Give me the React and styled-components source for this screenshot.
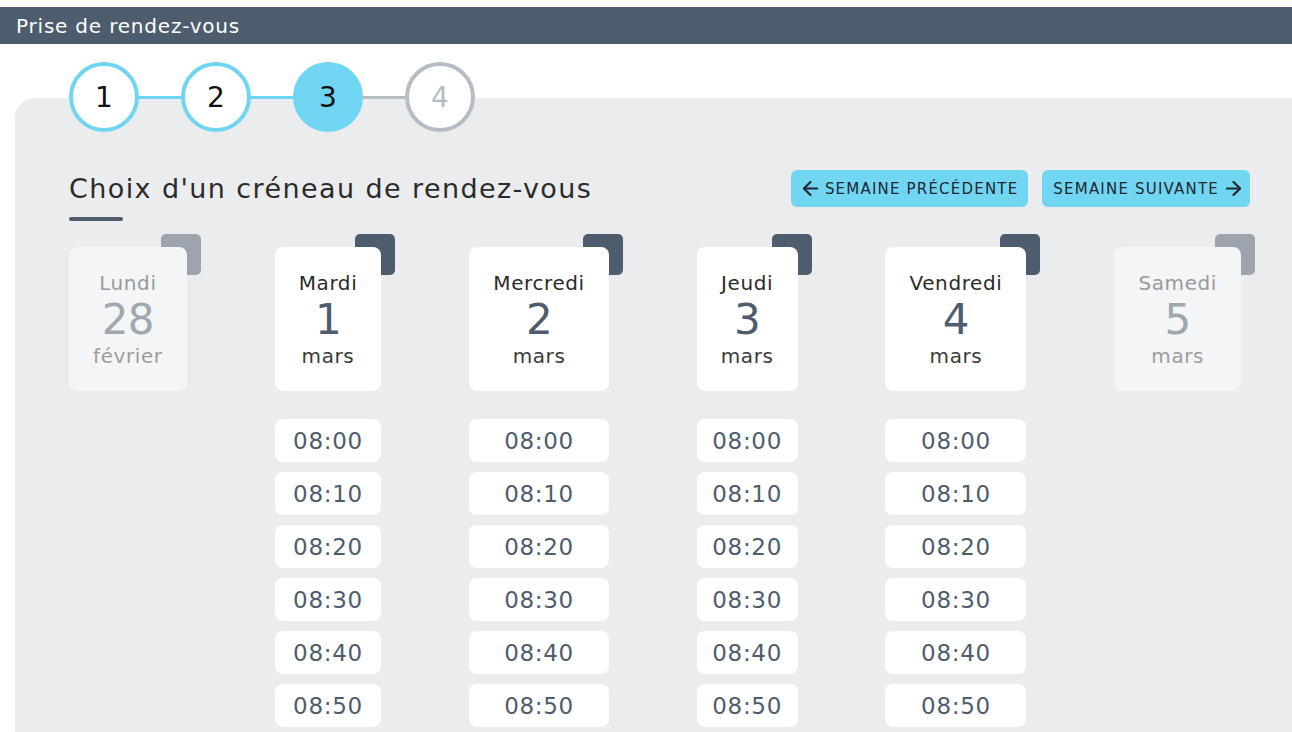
import styled, { createGlobalStyle } from 'styled-components';

const GlobalStyle = createGlobalStyle`
	body {
		margin: 0;
		background: #ffffff;
		font-family: 'DejaVu Sans', 'Liberation Sans', sans-serif;
		overflow: hidden;
	}
`;

const steps = [
	{ n: 1, state: 'done' },
	{ n: 2, state: 'done' },
	{ n: 3, state: 'current' },
	{ n: 4, state: 'todo' },
];

const days = [
	{ name: 'Lundi', num: 28, month: 'février', off: true },
	{ name: 'Mardi', num: 1, month: 'mars' },
	{ name: 'Mercredi', num: 2, month: 'mars' },
	{ name: 'Jeudi', num: 3, month: 'mars' },
	{ name: 'Vendredi', num: 4, month: 'mars' },
	{ name: 'Samedi', num: 5, month: 'mars', off: true },
];

const slots = ['08:00', '08:10', '08:20', '08:30', '08:40', '08:50'];

const Arrow = ({ dir }) => (
	<svg width='15' height='15' viewBox='4 4 16 16' fill='none' stroke='currentColor' strokeWidth='2.3' strokeLinecap='round' strokeLinejoin='round'>
		{dir === 'left' ? (
			<>
				<path d='M12 19l-7-7 7-7' />
				<path d='M19 12H5' />
			</>
		) : (
			<>
				<path d='M12 5l7 7-7 7' />
				<path d='M5 12h14' />
			</>
		)}
	</svg>
);

export default function App() {
	return (
		<Page>
			<GlobalStyle />
			<TopBar>Prise de rendez-vous</TopBar>
			<Main>
				<Stepper>
					{steps.map((s, i) => (
						<StepItem key={s.n}>
							{i > 0 && <StepLine $on={s.state !== 'todo'} />}
							<StepCircle $state={s.state}>{s.n}</StepCircle>
						</StepItem>
					))}
				</Stepper>
				<Panel>
					<HeadRow>
						<Title>Choix d'un créneau de rendez-vous</Title>
						<Nav>
							<NavBtn $side='left'>
								<Arrow dir='left' />
								Semaine précédente
							</NavBtn>
							<NavBtn $side='right'>
								Semaine suivante
								<Arrow dir='right' />
							</NavBtn>
						</Nav>
					</HeadRow>
					<Underline />
					<DayRow>
						{days.map((d) => (
							<DayCol key={d.name}>
								<CardWrap>
									<Tab $off={d.off} />
									<DayCard $off={d.off}>
										<DayName $off={d.off}>{d.name}</DayName>
										<DayNum $off={d.off}>{d.num}</DayNum>
										<Month $off={d.off}>{d.month}</Month>
									</DayCard>
								</CardWrap>
								{!d.off && (
									<Slots>
										{slots.map((t) => (
											<Slot key={t}>{t}</Slot>
										))}
									</Slots>
								)}
							</DayCol>
						))}
					</DayRow>
				</Panel>
			</Main>
		</Page>
	);
}

const Page = styled.div`
	padding-top: 7px;
`;

const TopBar = styled.header`
	height: 37px;
	background: #4e5d6e;
	color: #ffffff;
	font-size: 20px;
	letter-spacing: 0.8px;
	display: flex;
	align-items: center;
	padding-left: 16px;
`;

const Main = styled.main`
	padding-left: 15px;
`;

const Stepper = styled.div`
	display: flex;
	align-items: center;
	margin: 18px 0 -34px 54px;
	position: relative;
	z-index: 1;
`;

const StepItem = styled.div`
	display: flex;
	align-items: center;
`;

const StepLine = styled.div`
	width: 42px;
	height: 3px;
	background: ${(p) => (p.$on ? '#6fd5f2' : '#b6bcc3')};
`;

const StepCircle = styled.div`
	box-sizing: border-box;
	width: 70px;
	height: 70px;
	border-radius: 50%;
	border: 4px solid ${(p) => (p.$state === 'todo' ? '#b6bcc3' : '#6fd5f2')};
	background: ${(p) => (p.$state === 'current' ? '#6fd5f2' : '#ffffff')};
	color: ${(p) => (p.$state === 'todo' ? '#b6bcc3' : '#111111')};
	display: flex;
	align-items: center;
	justify-content: center;
	font-size: 28px;
	font-weight: 400;
`;

const Panel = styled.section`
	background: #ebecee;
	border-top-left-radius: 20px;
	padding: 72px 37px 0 54px;
	height: 700px;
`;

const HeadRow = styled.div`
	display: flex;
	align-items: center;
	justify-content: space-between;
	padding-right: 5px;
	height: 37px;
`;

const Title = styled.h1`
	margin: 0;
	font-size: 27px;
	letter-spacing: 1.4px;
	font-weight: 400;
	color: #2b2b2b;
`;

const Nav = styled.div`
	display: flex;
	gap: 14px;
`;

const NavBtn = styled.button`
	height: 37px;
	display: flex;
	align-items: center;
	gap: 7px;
	padding: ${(p) => (p.$side === 'left' ? '0 10px 0 12px' : '0 9px 0 11px')};
	border: none;
	border-radius: 6px;
	background: #70d6f2;
	color: #1f2630;
	font-family: inherit;
	font-size: 15px;
	letter-spacing: 1.2px;
	text-transform: uppercase;
	cursor: pointer;
`;

const Underline = styled.div`
	width: 54px;
	height: 4px;
	border-radius: 2px;
	background: #4e5d6e;
	margin-top: 10px;
`;

const DayRow = styled.div`
	display: flex;
	justify-content: space-between;
	align-items: flex-start;
	margin-top: 13px;
`;

const DayCol = styled.div`
	display: flex;
	flex-direction: column;
	padding: 13px 14px 0 0;
`;

const CardWrap = styled.div`
	position: relative;
`;

const Tab = styled.div`
	position: absolute;
	top: -13px;
	right: -14px;
	width: 40px;
	height: 41px;
	border-radius: 5px;
	background: ${(p) => (p.$off ? '#9da4ad' : '#4e5d6e')};
`;

const DayCard = styled.div`
	position: relative;
	box-sizing: border-box;
	height: 144px;
	padding: 24px 24px 0;
	border-radius: 8px;
	background: ${(p) => (p.$off ? '#f4f5f7' : '#ffffff')};
	display: flex;
	flex-direction: column;
	align-items: center;
	text-align: center;
`;

const DayName = styled.div`
	font-size: 20px;
	line-height: 24px;
	letter-spacing: 0.6px;
	color: ${(p) => (p.$off ? '#9a9a9a' : '#2b2b2b')};
`;

const DayNum = styled.div`
	font-size: 42px;
	line-height: 49px;
	letter-spacing: -0.5px;
	color: ${(p) => (p.$off ? '#a0a7b0' : '#4e5d6e')};
`;

const Month = styled.div`
	font-size: 20px;
	line-height: 24px;
	letter-spacing: 0.6px;
	color: ${(p) => (p.$off ? '#a09c9c' : '#3a3a3a')};
`;

const Slots = styled.div`
	display: flex;
	flex-direction: column;
	gap: 10px;
	margin-top: 28px;
`;

const Slot = styled.div`
	height: 43px;
	border-radius: 8px;
	background: #ffffff;
	color: #4e5d6e;
	font-size: 23px;
	letter-spacing: 0.7px;
	display: flex;
	align-items: center;
	justify-content: center;
`;
